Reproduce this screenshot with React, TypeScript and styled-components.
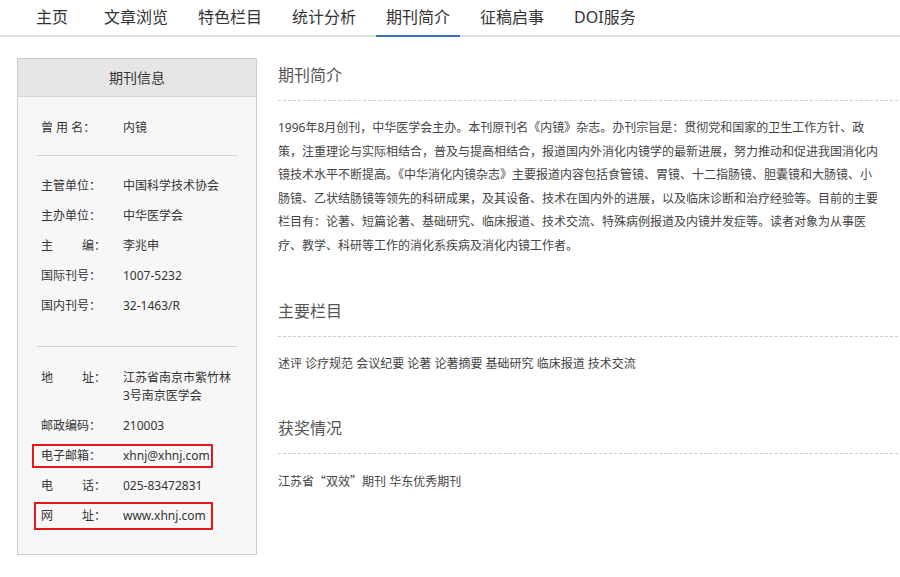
import styled, { createGlobalStyle } from 'styled-components'

const GlobalStyle = createGlobalStyle`
  html, body {
    margin: 0;
    padding: 0;
    background: #fff;
  }
  body {
    font-family: "Noto Sans", "Noto Sans CJK SC", sans-serif;
    color: #333;
  }
  * {
    box-sizing: border-box;
  }
`

type InfoRow = {
  label: string
  value: string
  spread?: boolean
  mark?: { top: number; bottom: number; left: number }
}

const navItems = ['主页', '文章浏览', '特色栏目', '统计分析', '期刊简介', '征稿启事', 'DOI服务']

const infoGroups: Array<{ rows: InfoRow[]; padTop: number; padBottom: number; divider: boolean }> = [
  {
    padTop: 16,
    padBottom: 12,
    divider: true,
    rows: [{ label: '曾 用 名', value: '内镜' }],
  },
  {
    padTop: 15,
    padBottom: 25,
    divider: true,
    rows: [
      { label: '主管单位', value: '中国科学技术协会' },
      { label: '主办单位', value: '中华医学会' },
      { label: '主编', value: '李兆申', spread: true },
      { label: '国际刊号', value: '1007-5232' },
      { label: '国内刊号', value: '32-1463/R' },
    ],
  },
  {
    padTop: 16,
    padBottom: 23,
    divider: false,
    rows: [
      { label: '地址', value: '江苏省南京市紫竹林3号南京医学会', spread: true },
      { label: '邮政编码', value: '210003' },
      { label: '电子邮箱', value: 'xhnj@xhnj.com', mark: { top: 3, bottom: 3, left: -5 } },
      { label: '电话', value: '025-83472831', spread: true },
      { label: '网址', value: 'www.xhnj.com', spread: true, mark: { top: 1, bottom: 1, left: -3 } },
    ],
  },
]

const intro =
  '1996年8月创刊，中华医学会主办。本刊原刊名《内镜》杂志。办刊宗旨是：贯彻党和国家的卫生工作方针、政策，注重理论与实际相结合，普及与提高相结合，报道国内外消化内镜学的最新进展，努力推动和促进我国消化内镜技术水平不断提高。《中华消化内镜杂志》主要报道内容包括食管镜、胃镜、十二指肠镜、胆囊镜和大肠镜、小肠镜、乙状结肠镜等领先的科研成果，及其设备、技术在国内外的进展，以及临床诊断和治疗经验等。目前的主要栏目有：论著、短篇论著、基础研究、临床报道、技术交流、特殊病例报道及内镜并发症等。读者对象为从事医疗、教学、科研等工作的消化系疾病及消化内镜工作者。'

export default function App() {
  return (
    <>
      <GlobalStyle />
      <Nav>
        {navItems.map((item) => (
          <NavItem key={item} $active={item === '期刊简介'}>
            {item}
          </NavItem>
        ))}
      </Nav>

      <Main>
        <Sidebar>
          <SidebarHeader>期刊信息</SidebarHeader>
          {infoGroups.map((group, gi) => (
            <Group key={gi} $padTop={group.padTop} $padBottom={group.padBottom} $divider={group.divider}>
              {group.rows.map((row) => (
                <Row key={row.label} $mark={row.mark}>
                  <Label>
                    <LabelText $spread={row.spread}>{row.label}</LabelText>：
                  </Label>
                  <Value>{row.value}</Value>
                </Row>
              ))}
            </Group>
          ))}
        </Sidebar>

        <Content>
          <Section>
            <SectionTitle>期刊简介</SectionTitle>
            <Paragraph>{intro}</Paragraph>
          </Section>
          <Section>
            <SectionTitle>主要栏目</SectionTitle>
            <Paragraph>述评 诊疗规范 会议纪要 论著 论著摘要 基础研究 临床报道 技术交流</Paragraph>
          </Section>
          <Section>
            <SectionTitle>获奖情况</SectionTitle>
            <Paragraph>
              江苏省<Quoted>“双效”</Quoted>期刊 华东优秀期刊
            </Paragraph>
          </Section>
        </Content>
      </Main>
    </>
  )
}

const Nav = styled.nav`
  display: flex;
  gap: 10px;
  padding-left: 20px;
  height: 37px;
  border-bottom: 2px solid #e0e0e0;
`

const NavItem = styled.a<{ $active?: boolean }>`
  min-width: 64px;
  padding: 0 10px;
  height: 37px;
  margin-bottom: -2px;
  line-height: 35px;
  text-align: center;
  font-size: 16px;
  color: #333;
  white-space: nowrap;
  cursor: pointer;
  border-bottom: 2px solid ${(p) => (p.$active ? '#3a6fc0' : 'transparent')};
`

const Main = styled.div`
  display: flex;
  align-items: flex-start;
  gap: 21px;
  padding: 21px 2px 20px 17px;
`

const Sidebar = styled.aside`
  flex: 0 0 240px;
  background: #f7f7f7;
  border: 1px solid #ccc;
`

const SidebarHeader = styled.div`
  height: 38px;
  line-height: 37px;
  text-align: center;
  font-size: 14px;
  color: #333;
  background: #e6e6e6;
  border-bottom: 1px solid #d6d6d6;
`

const Group = styled.div<{ $padTop: number; $padBottom: number; $divider: boolean }>`
  margin: 0 19px;
  padding: ${(p) => p.$padTop}px 0 ${(p) => p.$padBottom}px;
  border-bottom: ${(p) => (p.$divider ? '1px solid #cfcfcf' : 'none')};
`

const Row = styled.div<{ $mark?: { top: number; bottom: number; left: number } }>`
  position: relative;
  display: flex;
  align-items: flex-start;
  padding: 6px 4px 6px 4px;
  font-size: 12px;
  line-height: 18px;
  color: #333;

  ${(p) =>
    p.$mark &&
    `
    &::after {
      content: '';
      position: absolute;
      top: ${p.$mark.top}px;
      bottom: ${p.$mark.bottom}px;
      left: ${p.$mark.left}px;
      right: 24px;
      border: 2px solid #e3191b;
      pointer-events: none;
    }
  `}
`

const Label = styled.div`
  flex: 0 0 82px;
  display: flex;
  white-space: nowrap;
`

const LabelText = styled.span<{ $spread?: boolean }>`
  display: inline-block;
  white-space: pre;
  ${(p) =>
    p.$spread &&
    `
    width: 53px;
    text-align: justify;
    text-align-last: justify;
  `}
`

const Value = styled.div`
  flex: 1;
  min-width: 0;
`

const Content = styled.main`
  flex: 1;
  display: flex;
  flex-direction: column;
  gap: 36px;
`

const Section = styled.section`
  display: flex;
  flex-direction: column;
`

const SectionTitle = styled.h2`
  margin: 0;
  padding: 5px 0 13px;
  font-size: 16px;
  font-weight: normal;
  line-height: 24px;
  color: #555;
  border-bottom: 1px dashed #ccc;
`

const Paragraph = styled.p`
  margin: 15px 0 0;
  width: 604px;
  font-size: 12px;
  line-height: 23.6px;
  color: #444;
`

const Quoted = styled.span`
  font-family: "Noto Sans CJK SC", sans-serif;
`
